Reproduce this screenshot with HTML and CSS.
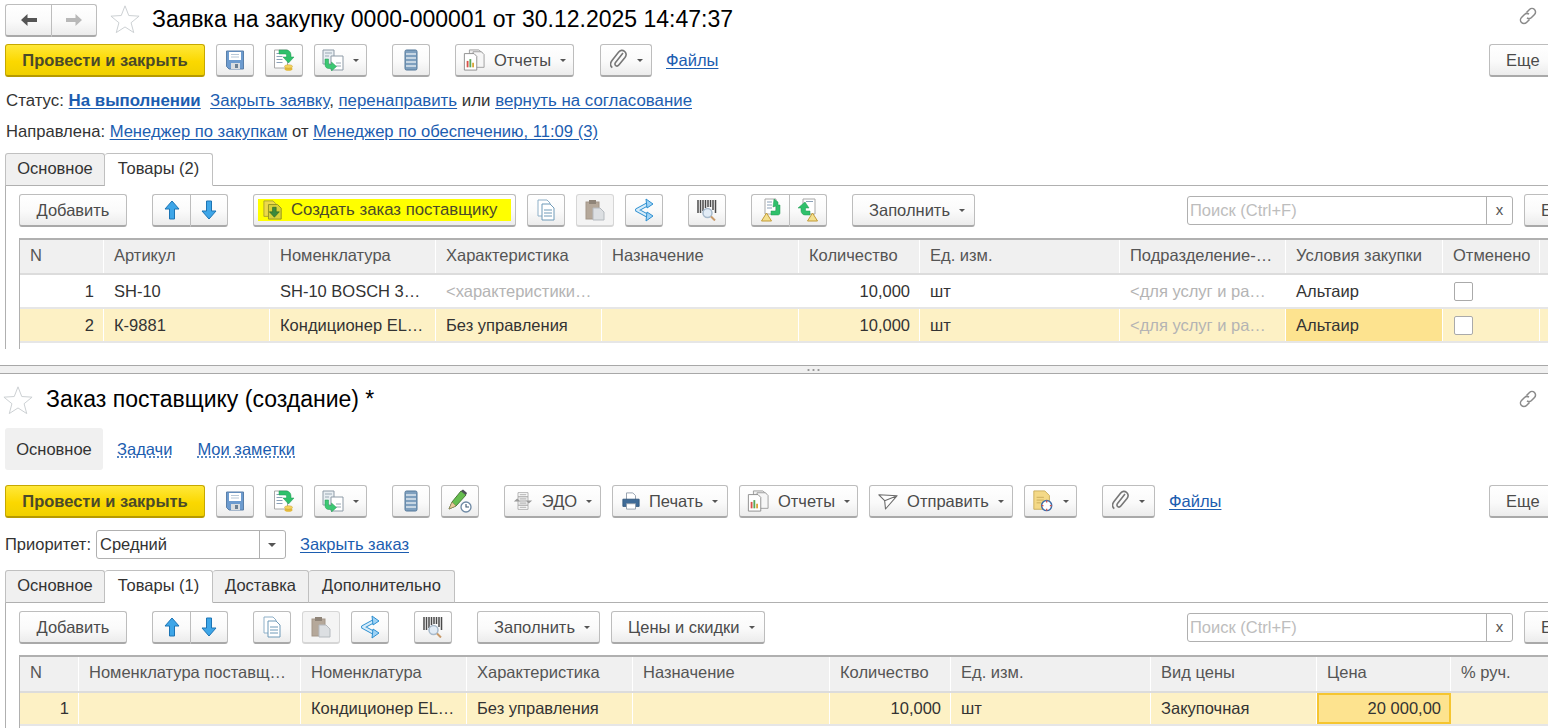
FILE: index.html
```html
<!DOCTYPE html>
<html lang="ru">
<head>
    <meta charset="UTF-8">
    <title>Заявка на закупку</title>
    <link rel="stylesheet" href="styles.css">
</head>
<body>
    <svg class="defs" width="0" height="0">
        <defs>
            <symbol id="i-star" viewBox="0 0 32 30"><path d="M16 1.500l4 10.300 11 .7-8.500 7 2.800 10.500L16 24l-9.300 6 2.800-10.500L1 12.500l11-.7z" fill="#fff" stroke="#c9cdd0"/></symbol>
            <symbol id="i-link" viewBox="0 0 20 20"><g fill="none" stroke="#8a8a8a" stroke-width="1.500"><path d="M8.500 6.500l3-3a3.500 3.500 0 0 1 5 5l-3 3a3.500 3.500 0 0 1-4.500.3"/><path d="M11.500 13.500l-3 3a3.500 3.500 0 0 1-5-5l3-3a3.500 3.500 0 0 1 4.500-.3"/></g></symbol>
            <symbol id="i-save" viewBox="0 0 20 20"><path d="M1.500 1h17v18H4l-2.500-2.500z" fill="#6c9bcf" stroke="#5a7fa8"/><rect x="4" y="2" width="12" height="8" fill="#fff"/><path d="M6 4.500h8M6 7h8" stroke="#b8c8d8"/><rect x="6" y="13" width="9" height="6" fill="#d9dde0"/><rect x="10" y="14" width="3" height="4" fill="#6b7f92"/></symbol>
            <symbol id="i-post" viewBox="0 0 22 22"><path d="M1.500 1h13v18h-13z" fill="#fff" stroke="#a8a8a8"/><path d="M3.500 4.500h8M3.500 7.500h6M3.500 10.500h6M3.500 13.500h6" stroke="#8aa0b8"/><path d="M6 1h7c3 0 5 2 5 5v2h3l-5.500 6L10 8h3.500V6.500C13.500 5.500 13 5 12 5H6z" fill="#2fc06b" stroke="#1f9a50" stroke-width=".5"/><ellipse cx="15.500" cy="20" rx="4" ry="1.800" fill="#e3b93a"/><ellipse cx="15.500" cy="17.500" rx="4" ry="1.800" fill="#f4d35e" stroke="#c89f2a" stroke-width=".5"/></symbol>
            <symbol id="i-based" viewBox="0 0 22 22"><path d="M1 1h11v14H1z" fill="#e8eef2" stroke="#8d9aa6"/><path d="M3 4h7M3 7h4" stroke="#9aa8b4"/><path d="M9 7h12v14H9z" fill="#fff" stroke="#8d9aa6"/><path d="M14 14h5M14 17h5" stroke="#9aa8b4"/><path d="M3 10h3.500v4.500c0 .8.500 1 1 1h2V13l5 4.500-5 4.500v-2.500H7c-2.500 0-4-1.500-4-4z" fill="#3cc873" stroke="#239a50" stroke-width=".5"/></symbol>
            <symbol id="i-list" viewBox="0 0 14 22"><rect x="1" y="1" width="12" height="20" rx="1.500" fill="#7fa0bf" stroke="#55789a"/><path d="M2 5h10M2 9h10M2 13h10M2 17h10" stroke="#dfe8f0" stroke-width="1.500"/></symbol>
            <symbol id="i-reports" viewBox="0 0 24 24"><path d="M7 1h10l4 3v15H7z" fill="#eee" stroke="#9a9a9a"/><path d="M11 3h9l3 3v14H11z" fill="#f6f6f6" stroke="#9a9a9a"/><path d="M1.500 5H12l3 3v15H1.500z" fill="#fff" stroke="#8a8a8a"/><rect x="4" y="13" width="2" height="7" fill="#d8524a"/><rect x="7" y="11" width="2" height="9" fill="#58a85a"/><rect x="10" y="15" width="2" height="5" fill="#d9a63a"/></symbol>
            <symbol id="i-clip" viewBox="0 0 18 22"><path d="M14 6l-7.500 9.500c-1 1.300-.5 2.500.3 3.100.9.700 2 .6 3-.6L16 10.500c1.800-2.300 1.300-4.800-.5-6.200-1.900-1.500-4.300-1.200-6 1L3 13.500c-2.300 3-1.800 5.700.3 7.200" transform="translate(-1 -2)" fill="none" stroke="#777" stroke-width="1.600"/></symbol>
            <symbol id="i-back" viewBox="0 0 18 14"><path d="M7.500 1v4H17v4H7.500v4L1 7z" fill="#555"/></symbol>
            <symbol id="i-fwd" viewBox="0 0 18 14"><path d="M10.500 1v4H1v4h9.500v4L17 7z" fill="#b8b8b8"/></symbol>
            <symbol id="i-up" viewBox="0 0 16 20"><path d="M8 1l7 8h-4.500v10h-5V9H1z" fill="#3ea6e8" stroke="#1c74b4"/></symbol>
            <symbol id="i-down" viewBox="0 0 16 20"><path d="M8 19l7-8h-4.500V1h-5v10H1z" fill="#3ea6e8" stroke="#1c74b4"/></symbol>
            <symbol id="i-order" viewBox="0 0 22 22"><path d="M1 1h10l3 3v14H1z" fill="#ecd94a" stroke="#a8a030"/><path d="M6 5h10l4 4v12H6z" fill="#d8d23a" stroke="#8f8f20"/><path d="M10.500 8h4v5H18l-5.500 6L7 13h3.500z" fill="#3c8a3c" stroke="#1f5a1f" stroke-width=".6"/></symbol>
            <symbol id="i-copy" viewBox="0 0 20 22"><path d="M2 1h9l3 3v13H2z" fill="#fff" stroke="#8fb0c8"/><path d="M6 5h8l4 4v12H6z" fill="#fff" stroke="#6f9ab8"/><path d="M8 11h8M8 14h8M8 17h8" stroke="#6f9ab8"/></symbol>
            <symbol id="i-paste" viewBox="0 0 20 22"><rect x="1" y="3" width="13" height="17" fill="#b5a89a" stroke="#a39688"/><rect x="4" y="1" width="7" height="4" fill="#8f8478"/><path d="M8 9h7l4 4v8H8z" fill="#dcdfe2" stroke="#b5babf"/></symbol>
            <symbol id="i-share" viewBox="0 0 22 24"><path d="M15 6L4 12l11 6" fill="none" stroke="#2d8fd0" stroke-width="4" stroke-linejoin="round"/><path d="M15 6L4 12l11 6" fill="none" stroke="#d6ecfa" stroke-width="2" stroke-linejoin="round"/><path d="M13 1l7 5-6 4zM14 14l6 4-7 5z" fill="#9ed2f5" stroke="#2d8fd0" stroke-linejoin="round"/></symbol>
            <symbol id="i-barcode" viewBox="0 0 20 22"><path d="M1 1v13M3.500 1v13M6 1v11M8.500 1v8M11 1v7M13.500 1v7M16 1v10M18.500 1v13" stroke="#4a4a4a" stroke-width="1.500"/><circle cx="10.500" cy="14" r="4.500" fill="#dfeaf5" fill-opacity=".9" stroke="#a8bacb" stroke-width="1.500"/><path d="M14 17.500l4 4" stroke="#c89a6a" stroke-width="2"/></symbol>
            <symbol id="i-triangle-a" viewBox="0 0 22 24"><path d="M5 1h11v15H5z" fill="#fff" stroke="#a8a8a8"/><path d="M7 4h5M7 7h5M7 10h5" stroke="#8aa0b8"/><path d="M14 1l4 3v3h2v8c0 1-1 2-2 2h-7v-4h4c.5 0 1-.5 1-1V8l-3 1z" fill="#2fc06b" stroke="#1f9a50" stroke-width=".5"/><path d="M6.500 15l5 8h-10z" fill="#f3e08f" stroke="#c29a35"/></symbol>
            <symbol id="i-triangle-b" viewBox="0 0 22 24"><path d="M6 1h12v15H6z" fill="#fff" stroke="#a8a8a8"/><path d="M9 3.500h7" stroke="#8aa0b8"/><path d="M8 4l-7 6h3v3c0 2 2 4 4 4h5v-4H10c-1 0-1.500-.5-1.500-1v-2H12z" fill="#2fc06b" stroke="#1f9a50" stroke-width=".5"/><path d="M15.500 15l5 8h-10z" fill="#f3e08f" stroke="#c29a35"/></symbol>
            <symbol id="i-pencil" viewBox="0 0 24 24"><path d="M1 20l3-7L13 2l5 4L8 17z" fill="#65bd4e" stroke="#4a7a38"/><path d="M13 2l2-1.500 4 3.500-1 2z" fill="#4a4f55"/><path d="M1 20l3-7 4 4z" fill="#e6c99a" stroke="#8a7350" stroke-width=".5"/><circle cx="18" cy="18" r="5" fill="#fff" stroke="#6f8aa5" stroke-width="1.300"/><path d="M18 15v3h3" fill="none" stroke="#3f5870" stroke-width="1.100"/></symbol>
            <symbol id="i-edo" viewBox="0 0 24 22"><path d="M6 1h12v5H6zM6 16h12v5H6z" fill="#fff" stroke="#a3a3a3"/><path d="M6 6h12v10H6z" fill="#f2f2f2" stroke="#a3a3a3"/><path d="M8 3.500h8M8 8.500h8M8 11h8M8 13.500h8M8 18.500h8" stroke="#9a9a9a"/><path d="M5 8L1 11.500h8zM19 14l-4-3.500h8z" fill="#9a9a9a"/></symbol>
            <symbol id="i-print" viewBox="0 0 20 20"><path d="M5 1h7l3 3v5H5z" fill="#fff" stroke="#8f9ba8"/><path d="M1 8h18v8H1z" fill="#3f6b97" stroke="#32587d"/><path d="M5 13h10v6H5z" fill="#fff" stroke="#8f9ba8"/></symbol>
            <symbol id="i-send" viewBox="0 0 24 20"><path d="M1 2l22 1L9 19 8 9zM8 9l15-6" fill="#fff" stroke="#6a6a6a" stroke-width="1.300" stroke-linejoin="round"/></symbol>
            <symbol id="i-doc-clock" viewBox="0 0 24 24"><path d="M2 1h12l5 5v15H2z" fill="#f4d987" stroke="#c9ac5a"/><path d="M5 8h8M5 11h8M5 14h5" stroke="#c9ac5a"/><circle cx="16" cy="17" r="5.500" fill="#fff" stroke="#3f6ea8" stroke-width="1.600"/><path d="M16 11.500v2M16 20.500v2M10.500 17h2M19.500 17h2" stroke="#d8524a" stroke-width="1.400"/></symbol>
        </defs>
    </svg>

    <section class="pane pane-top">
        <div class="title-row">
            <div class="btn-group nav-group">
                <button class="btn nav-btn"><svg class="ic" width="18" height="14"><use href="#i-back"/></svg></button>
                <button class="btn nav-btn"><svg class="ic" width="18" height="14"><use href="#i-fwd"/></svg></button>
            </div>
            <svg class="star star-top" width="30" height="29"><use href="#i-star"/></svg>
            <h1 class="title">Заявка на закупку 0000-000001 от 30.12.2025 14:47:37</h1>
            <svg class="link-ic link-ic-top" width="20" height="20"><use href="#i-link"/></svg>
        </div>

        <div class="cmd-row cmd-top">
            <button class="btn btn-post">Провести и закрыть</button>
            <button class="btn btn-ic gap-11"><svg class="ic" width="20" height="20"><use href="#i-save"/></svg></button>
            <button class="btn btn-ic gap-11"><svg class="ic" width="22" height="22"><use href="#i-post"/></svg></button>
            <button class="btn btn-drop w-53 gap-11"><svg class="ic" width="22" height="22"><use href="#i-based"/></svg><i class="caret"></i></button>
            <button class="btn btn-ic gap-25"><svg class="ic" width="14" height="22"><use href="#i-list"/></svg></button>
            <button class="btn btn-drop w-119 gap-25"><svg class="ic" width="22" height="22"><use href="#i-reports"/></svg><span>Отчеты</span><i class="caret"></i></button>
            <button class="btn btn-drop w-52 gap-26"><svg class="ic" width="18" height="22"><use href="#i-clip"/></svg><i class="caret"></i></button>
            <a class="link files-link">Файлы</a>
            <button class="btn btn-more">Еще</button>
        </div>

        <div class="info-row status-row">Статус: <a class="link strong">На выполнении</a>&nbsp; <a class="link">Закрыть заявку</a>, <a class="link">перенаправить</a> или <a class="link">вернуть на согласование</a></div>
        <div class="info-row sent-row">Направлена: <a class="link">Менеджер по закупкам</a> от <a class="link">Менеджер по обеспечению, 11:09 (3)</a></div>

        <div class="tabs">
            <div class="tab w-100">Основное</div>
            <div class="tab tab-active w-108">Товары (2)</div>
        </div>
        <div class="tab-body">
            <div class="tbl-bar">
                <button class="btn w-108">Добавить</button>
                <div class="btn-group gap-25">
                    <button class="btn btn-half"><svg class="ic" width="16" height="20"><use href="#i-up"/></svg></button>
                    <button class="btn btn-half"><svg class="ic" width="16" height="20"><use href="#i-down"/></svg></button>
                </div>
                <button class="btn w-263 gap-25"><span class="mark"><svg class="ic" width="20" height="20"><use href="#i-order"/></svg><span>Создать заказ поставщику</span></span></button>
                <button class="btn btn-ic gap-11"><svg class="ic" width="20" height="22"><use href="#i-copy"/></svg></button>
                <button class="btn btn-ic btn-off gap-11"><svg class="ic" width="20" height="22"><use href="#i-paste"/></svg></button>
                <button class="btn btn-ic gap-11"><svg class="ic" width="22" height="24"><use href="#i-share"/></svg></button>
                <button class="btn btn-ic gap-25"><svg class="ic" width="20" height="22"><use href="#i-barcode"/></svg></button>
                <div class="btn-group gap-25">
                    <button class="btn btn-half"><svg class="ic" width="22" height="24"><use href="#i-triangle-a"/></svg></button>
                    <button class="btn btn-half"><svg class="ic" width="22" height="24"><use href="#i-triangle-b"/></svg></button>
                </div>
                <button class="btn btn-drop btn-text w-123 gap-25"><span>Заполнить</span><i class="caret"></i></button>
                <div class="search">
                    <span class="search-text">Поиск (Ctrl+F)</span>
                    <span class="search-x">x</span>
                </div>
                <button class="btn btn-cut">Е</button>
            </div>

            <div class="grid grid-a">
                <div class="row row-head">
                    <div class="cell">N</div>
                    <div class="cell">Артикул</div>
                    <div class="cell">Номенклатура</div>
                    <div class="cell">Характеристика</div>
                    <div class="cell">Назначение</div>
                    <div class="cell">Количество</div>
                    <div class="cell">Ед. изм.</div>
                    <div class="cell">Подразделение-…</div>
                    <div class="cell">Условия закупки</div>
                    <div class="cell">Отменено</div>
                    <div class="cell"></div>
                </div>
                <div class="row">
                    <div class="cell num">1</div>
                    <div class="cell">SH-10</div>
                    <div class="cell">SH-10 BOSCH 3…</div>
                    <div class="cell hint">&lt;характеристики…</div>
                    <div class="cell"></div>
                    <div class="cell num">10,000</div>
                    <div class="cell">шт</div>
                    <div class="cell hint">&lt;для услуг и ра…</div>
                    <div class="cell">Альтаир</div>
                    <div class="cell"><i class="check"></i></div>
                    <div class="cell"></div>
                </div>
                <div class="row row-sel">
                    <div class="cell num">2</div>
                    <div class="cell">К-9881</div>
                    <div class="cell">Кондиционер EL…</div>
                    <div class="cell">Без управления</div>
                    <div class="cell"></div>
                    <div class="cell num">10,000</div>
                    <div class="cell">шт</div>
                    <div class="cell hint">&lt;для услуг и ра…</div>
                    <div class="cell cell-cur">Альтаир</div>
                    <div class="cell"><i class="check"></i></div>
                    <div class="cell"></div>
                </div>
            </div>
        </div>
    </section>

    <div class="splitter"><span class="dots"></span></div>

    <section class="pane pane-bottom">
        <div class="title-row title-row-b">
            <svg class="star" width="30" height="29"><use href="#i-star"/></svg>
            <h1 class="title title-b">Заказ поставщику (создание) *</h1>
            <svg class="link-ic" width="20" height="20"><use href="#i-link"/></svg>
        </div>

        <nav class="subnav">
            <span class="subnav-cur">Основное</span>
            <a class="link dotted">Задачи</a>
            <a class="link dotted">Мои заметки</a>
        </nav>

        <div class="cmd-row cmd-bottom">
            <button class="btn btn-post">Провести и закрыть</button>
            <button class="btn btn-ic gap-11"><svg class="ic" width="20" height="20"><use href="#i-save"/></svg></button>
            <button class="btn btn-ic gap-11"><svg class="ic" width="22" height="22"><use href="#i-post"/></svg></button>
            <button class="btn btn-drop w-53 gap-11"><svg class="ic" width="22" height="22"><use href="#i-based"/></svg><i class="caret"></i></button>
            <button class="btn btn-ic gap-25"><svg class="ic" width="14" height="22"><use href="#i-list"/></svg></button>
            <button class="btn btn-ic gap-11"><svg class="ic" width="24" height="24"><use href="#i-pencil"/></svg></button>
            <button class="btn btn-drop w-97 gap-25"><svg class="ic" width="20" height="20"><use href="#i-edo"/></svg><span>ЭДО</span><i class="caret"></i></button>
            <button class="btn btn-drop w-116 gap-11"><svg class="ic" width="18" height="18"><use href="#i-print"/></svg><span>Печать</span><i class="caret"></i></button>
            <button class="btn btn-drop w-119 gap-11"><svg class="ic" width="22" height="22"><use href="#i-reports"/></svg><span>Отчеты</span><i class="caret"></i></button>
            <button class="btn btn-drop w-144 gap-11"><svg class="ic" width="20" height="17"><use href="#i-send"/></svg><span>Отправить</span><i class="caret"></i></button>
            <button class="btn btn-drop w-53 gap-11"><svg class="ic" width="22" height="22"><use href="#i-doc-clock"/></svg><i class="caret"></i></button>
            <button class="btn btn-drop w-53 gap-25"><svg class="ic" width="18" height="22"><use href="#i-clip"/></svg><i class="caret"></i></button>
            <a class="link files-link">Файлы</a>
            <button class="btn btn-more">Еще</button>
        </div>

        <div class="prio-row">
            <span>Приоритет:</span>
            <div class="select">
                <span class="select-val">Средний</span>
                <span class="select-arrow"><i class="caret caret-dark"></i></span>
            </div>
            <a class="link">Закрыть заказ</a>
        </div>

        <div class="tabs tabs-b">
            <div class="tab w-100">Основное</div>
            <div class="tab tab-active w-108">Товары (1)</div>
            <div class="tab w-96">Доставка</div>
            <div class="tab w-146">Дополнительно</div>
        </div>
        <div class="tab-body">
            <div class="tbl-bar">
                <button class="btn w-108">Добавить</button>
                <div class="btn-group gap-25">
                    <button class="btn btn-half"><svg class="ic" width="16" height="20"><use href="#i-up"/></svg></button>
                    <button class="btn btn-half"><svg class="ic" width="16" height="20"><use href="#i-down"/></svg></button>
                </div>
                <button class="btn btn-ic gap-25"><svg class="ic" width="20" height="22"><use href="#i-copy"/></svg></button>
                <button class="btn btn-ic btn-off gap-11"><svg class="ic" width="20" height="22"><use href="#i-paste"/></svg></button>
                <button class="btn btn-ic gap-11"><svg class="ic" width="22" height="24"><use href="#i-share"/></svg></button>
                <button class="btn btn-ic gap-25"><svg class="ic" width="20" height="22"><use href="#i-barcode"/></svg></button>
                <button class="btn btn-drop btn-text w-123 gap-25"><span>Заполнить</span><i class="caret"></i></button>
                <button class="btn btn-drop btn-text w-154 gap-11"><span>Цены и скидки</span><i class="caret"></i></button>
                <div class="search">
                    <span class="search-text">Поиск (Ctrl+F)</span>
                    <span class="search-x">x</span>
                </div>
                <button class="btn btn-cut">Е</button>
            </div>

            <div class="grid grid-b">
                <div class="row row-head">
                    <div class="cell">N</div>
                    <div class="cell">Номенклатура поставщ…</div>
                    <div class="cell">Номенклатура</div>
                    <div class="cell">Характеристика</div>
                    <div class="cell">Назначение</div>
                    <div class="cell">Количество</div>
                    <div class="cell">Ед. изм.</div>
                    <div class="cell">Вид цены</div>
                    <div class="cell">Цена</div>
                    <div class="cell">% руч.</div>
                </div>
                <div class="row row-sel">
                    <div class="cell num">1</div>
                    <div class="cell"></div>
                    <div class="cell">Кондиционер EL…</div>
                    <div class="cell">Без управления</div>
                    <div class="cell"></div>
                    <div class="cell num">10,000</div>
                    <div class="cell">шт</div>
                    <div class="cell">Закупочная</div>
                    <div class="cell num cell-edit">20 000,00</div>
                    <div class="cell"></div>
                </div>
            </div>
        </div>
    </section>
</body>
</html>
```

FILE: styles.css
```css
* {
    margin: 0;
    padding: 0;
    box-sizing: border-box;
}

body {
    font-family: "Liberation Sans", Arial, sans-serif;
    font-size: 16.5px;
    line-height: 17px;
    color: #333;
    background: #fff;
    width: 1548px;
    height: 728px;
    overflow: hidden;
}

.defs {
    position: absolute;
}

.ic {
    flex: none;
    display: block;
}

/* Panes */
.pane-top {
    height: 365px;
    padding-left: 5px;
    overflow: hidden;
}

.pane-bottom {
    height: 354px;
    padding-left: 5px;
    overflow: hidden;
}

.splitter {
    height: 9px;
    background: #f0f0f0;
    border-top: 1px solid #a8a8a8;
    border-bottom: 1px solid #a8a8a8;
    display: flex;
    justify-content: center;
    align-items: center;
}

.dots {
    width: 14px;
    height: 2px;
    margin-left: 77px;
    background: radial-gradient(circle, #999 1px, transparent 1.200px) 0 0 / 5px 2px repeat-x;
}

/* Title */
.title-row {
    display: flex;
    align-items: center;
    height: 36px;
    padding-top: 1px;
}

.title-row-b {
    height: 50px;
    margin-left: -2px;
    padding-top: 0;
}

.nav-group {
    height: 30px;
    margin-top: 1px;
}

.nav-btn {
    width: 46px;
    height: 30px;
}

.star-top {
    margin-left: 13px;
}

.title {
    font-size: 23px;
    line-height: 26px;
    font-weight: normal;
    color: #000;
    margin-left: 12px;
    white-space: nowrap;
}

.title-b {
    margin-left: 13px;
}

.link-ic {
    margin-left: auto;
    margin-right: 10px;
}

.link-ic-top {
    align-self: flex-start;
    margin-top: 5px;
}

/* Buttons */
.btn {
    font-family: inherit;
    font-size: 16.5px;
    color: #4b4b4b;
    height: 33px;
    flex: none;
    display: flex;
    align-items: center;
    justify-content: center;
    background: linear-gradient(#fff, #fafafa 55%, #ececec);
    border: 1px solid #bdbdbd;
    border-bottom: 2px solid #a9a9a9;
    border-radius: 3px;
}

.btn-ic {
    width: 38px;
}

.btn-off {
    background: #f4f4f4;
    border-color: #d6d6d6;
}

.btn-drop {
    gap: 9px;
}

.btn-text {
    justify-content: flex-start;
    padding-left: 16px;
}

.btn-post {
    width: 200px;
    font-weight: bold;
    color: #4a4a2a;
    background: linear-gradient(#ffe83a, #fbd800 55%, #f0d000);
    border: 1px solid #c6a800;
    border-bottom: 2px solid #b69a00;
}

.btn-more {
    width: 70px;
    margin-left: auto;
    margin-right: -11px;
    border-right: 0;
    justify-content: flex-start;
    padding-left: 16px;
}

.btn-cut {
    width: 40px;
    margin-left: 11px;
    margin-right: -16px;
    justify-content: flex-start;
    padding-left: 16px;
}

.btn-group {
    display: flex;
    flex: none;
}

.btn-group .btn:first-child {
    border-right: 0;
    border-radius: 3px 0 0 3px;
}

.btn-group .btn:last-child {
    border-left: 1px solid #bdbdbd;
    border-radius: 0 3px 3px 0;
}

.btn-half {
    width: 38px;
}

.caret {
    width: 0;
    height: 0;
    flex: none;
    border-left: 3px solid transparent;
    border-right: 3px solid transparent;
    border-top: 3px solid #555;
}

.caret-dark {
    border-left-width: 4px;
    border-right-width: 4px;
    border-top-width: 4px;
}

.w-52 { width: 52px; }
.w-53 { width: 53px; }
.w-96 { width: 96px; }
.w-97 { width: 97px; }
.w-100 { width: 100px; }
.w-108 { width: 108px; }
.w-116 { width: 116px; }
.w-119 { width: 119px; }
.w-123 { width: 123px; }
.w-144 { width: 144px; }
.w-146 { width: 146px; }
.w-154 { width: 154px; }
.w-263 { width: 263px; }

.gap-11 { margin-left: 11px; }
.gap-25 { margin-left: 25px; }
.gap-26 { margin-left: 26px; }

/* Command rows */
.cmd-row {
    display: flex;
    align-items: center;
}

.cmd-top {
    margin-top: 8px;
}

.files-link {
    margin-left: 14px;
}

.link {
    color: #1c5db0;
    text-decoration: underline;
    text-underline-offset: 2px;
}

.strong {
    font-weight: bold;
}

.dotted {
    text-decoration-style: dotted;
}

.info-row {
    padding-left: 1px;
    white-space: nowrap;
    color: #333;
}

.status-row {
    margin-top: 15px;
    font-size: 16.85px;
}

.sent-row {
    margin-top: 14px;
    font-size: 16.6px;
}

/* Subnav */
.subnav {
    display: flex;
    align-items: center;
    margin-top: 4px;
    gap: 25px;
}

.subnav-cur {
    width: 98px;
    height: 42px;
    margin-right: -11px;
    background: #f0f0f0;
    border-radius: 3px;
    display: flex;
    align-items: center;
    justify-content: center;
}

.cmd-bottom {
    margin-top: 15px;
}

.prio-row {
    display: flex;
    align-items: center;
    margin-top: 12px;
    height: 29px;
}

.select {
    width: 190px;
    height: 29px;
    margin-left: 5px;
    margin-right: 14px;
    display: flex;
    border: 1px solid #b0b0b0;
    border-radius: 3px;
}

.select-val {
    flex: 1;
    padding: 5px 3px;
}

.select-arrow {
    width: 26px;
    border-left: 1px solid #b0b0b0;
    display: flex;
    align-items: center;
    justify-content: center;
}

/* Tabs */
.tabs {
    display: flex;
    margin-top: 13px;
    position: relative;
    z-index: 1;
}

.tabs-b {
    margin-top: 11px;
}

.tab {
    height: 33px;
    margin-bottom: -1px;
    padding-bottom: 2px;
    display: flex;
    align-items: center;
    justify-content: center;
    background: #f0f0f0;
    border: 1px solid #c0c0c0;
    border-bottom: 1px solid #b0b0b0;
    border-left-width: 0;
    border-radius: 3px 3px 0 0;
}

.tab:first-child {
    border-left-width: 1px;
}

.tab-active {
    background: #fff;
    border-bottom-color: #fff;
}

.tab-body {
    border-top: 1px solid #b0b0b0;
    border-left: 1px solid #b0b0b0;
    padding-left: 13px;
    height: 164px;
    overflow: hidden;
}

.pane-bottom .tab-body {
    height: 130px;
}

.tbl-bar {
    display: flex;
    align-items: center;
    margin-top: 8px;
    height: 33px;
}

.search {
    width: 326px;
    height: 29px;
    margin-left: auto;
    display: flex;
    border: 1px solid #b0b0b0;
    border-radius: 3px;
}

.search-text {
    flex: 1;
    color: #bdbdbd;
    padding: 5px 2px;
}

.search-x {
    width: 26px;
    border-left: 1px solid #b0b0b0;
    text-align: center;
    padding-top: 4px;
    font-size: 15px;
    color: #555;
}

/* Tables */
.grid {
    margin-top: 11px;
    border-top: 2px solid #b0b0b0;
    border-left: 1px solid #b0b0b0;
    width: 1600px;
    min-height: 111px;
}

.row {
    display: grid;
    height: 34px;
    border-bottom: 2px solid #e6e6e6;
}

.row-head {
    height: 35px;
    background: #f0f0f0;
    border-bottom: 2px solid #dcdcdc;
    color: #555;
}

.grid-a .row {
    grid-template-columns: 84px 166px 166px 166px 197px 121px 200px 166px 157px 97px 1fr;
}

.grid-b .row {
    grid-template-columns: 59px 222px 166px 166px 197px 121px 200px 166px 134px 1fr;
}

.cell {
    display: flex;
    align-items: center;
    padding: 0 4px 0 10px;
    white-space: nowrap;
    overflow: hidden;
    border-right: 1px solid transparent;
}

.row-head .cell {
    background: #f0f0f0;
    border-right-color: #fff;
    padding-bottom: 3px;
}

.row-sel .cell {
    background: #fdf1c5;
    border-right-color: #fff;
}

.num {
    justify-content: flex-end;
    padding-right: 9px;
}

.hint {
    color: #b4b4b4;
}

.row-sel .cell-cur {
    background: #fde38f;
}

.row-sel .cell-edit {
    background: #fde38f;
    border: 2px solid #f5c530;
    padding-right: 8px;
}

.check {
    width: 19px;
    height: 19px;
    margin-left: 1px;
    background: #fff;
    border: 1px solid #aaa;
    border-radius: 2px;
}

.grid-b {
    min-height: 80px;
}

.grid-b .row-head {
    height: 36px;
}

.grid-b .row-sel {
    height: 33px;
}

/* Highlighter stroke over the button text */
.mark {
    display: flex;
    align-items: center;
    gap: 8px;
    width: 253px;
    height: 22px;
    padding-left: 5px;
    font-size: 16.8px;
    white-space: nowrap;
    background: #ffff00;
    color: #4a4a2a;
}
```
